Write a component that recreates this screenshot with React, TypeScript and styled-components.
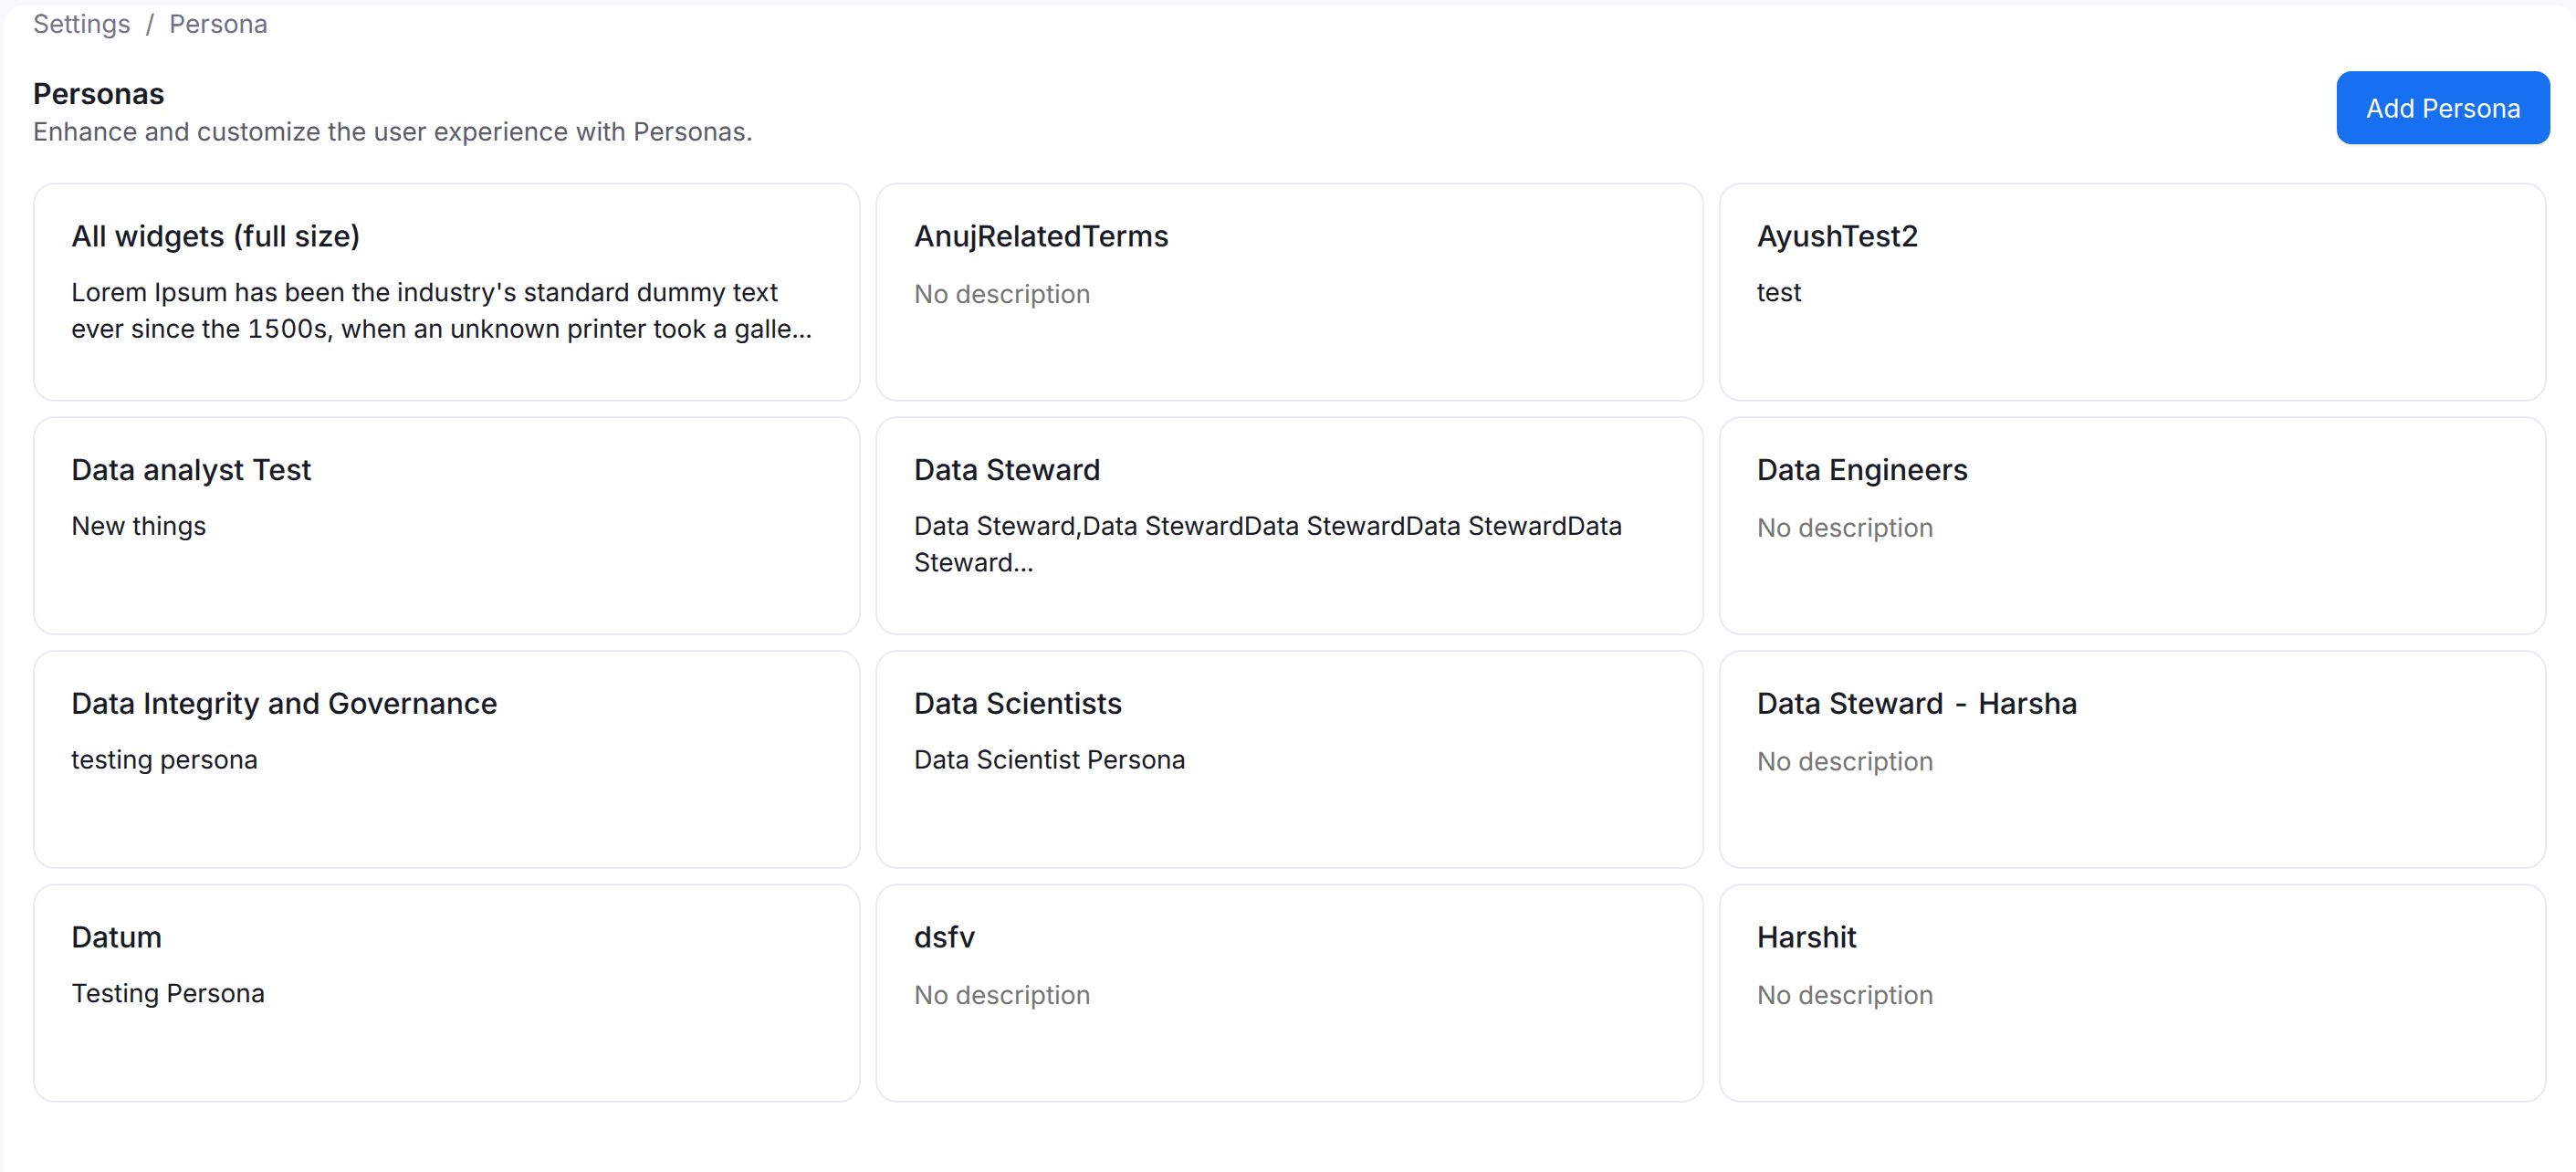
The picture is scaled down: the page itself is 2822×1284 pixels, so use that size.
import React from "react";
import styled, { createGlobalStyle } from "styled-components";

const Global = createGlobalStyle`
  html, body { margin: 0; padding: 0; background: #f8f9fd; }
  body {
    font-family: Inter, "Noto Sans", sans-serif;
    text-rendering: geometricPrecision;
    -webkit-font-smoothing: antialiased;
  }
`;

const Page = styled.div`
  box-sizing: border-box;
  width: 2822px;
  height: 1284px;
  padding: 6px 0 0 4px;
  overflow: hidden;
`;

const Panel = styled.main`
  box-sizing: border-box;
  height: 100%;
  background: #fff;
  border-radius: 24px 24px 0 0;
  padding: 2px 32px 0;
`;

const Breadcrumb = styled.nav`
  display: flex;
  gap: 16px;
  font-size: 28px;
  line-height: 36px;
`;

const Crumb = styled.span<{ $current?: boolean }>`
  color: ${(p) => (p.$current ? "#6f6f85" : "#757585")};
`;

const Header = styled.header`
  display: flex;
  align-items: flex-start;
  justify-content: space-between;
  margin-top: 34px;
`;

const TitleBlock = styled.div`
  display: flex;
  flex-direction: column;
  gap: 1px;
  margin-top: 5px;
`;

const Title = styled.h1`
  margin: 0;
  font-size: 32px;
  line-height: 40px;
  font-weight: 600;
  color: #181a25;
`;

const Subtitle = styled.p`
  margin: 0;
  font-size: 28px;
  line-height: 40px;
  color: #5a5c69;
`;

const AddButton = styled.button`
  box-sizing: border-box;
  width: 234px;
  height: 80px;
  margin-right: -4px;
  padding: 2px 0 0;
  border: 0;
  border-radius: 16px;
  background: #1770ef;
  color: #fff;
  font-family: inherit;
  font-size: 28px;
  font-weight: 400;
  box-shadow: 0 2px 4px rgba(16, 24, 40, 0.08);
`;

const Grid = styled.section`
  display: grid;
  grid-template-columns: repeat(3, 1fr);
  grid-auto-rows: 240px;
  gap: 16px;
  margin-top: 36px;
`;

const Card = styled.article`
  box-sizing: border-box;
  border: 2px solid #e9eaf5;
  border-radius: 24px;
  padding: 37px 40px;
`;

const CardTitle = styled.h2`
  margin: 0;
  font-size: 32px;
  line-height: 40px;
  font-weight: 500;
  color: #181a25;
`;

const TitleDash = styled.span`
  margin: 0 3px;
`;

const CardText = styled.p<{ $muted?: boolean }>`
  margin: ${(p) => (p.$muted ? "23px" : "21px")} 0 0;
  font-size: 28px;
  line-height: 40px;
  font-weight: 400;
  font-variant-numeric: tabular-nums;
  color: ${(p) => (p.$muted ? "#757575" : "#181a25")};
  display: -webkit-box;
  -webkit-box-orient: vertical;
  -webkit-line-clamp: 2;
  overflow: hidden;
`;

const personas: { name: string; text?: string }[] = [
  { name: "All widgets (full size)", text: "Lorem Ipsum has been the industry's standard dummy text ever since the 1500s, when an unknown printer took a galle..." },
  { name: "AnujRelatedTerms" },
  { name: "AyushTest2", text: "test" },
  { name: "Data analyst Test", text: "New things" },
  { name: "Data Steward", text: "Data Steward,Data StewardData StewardData StewardData Steward..." },
  { name: "Data Engineers" },
  { name: "Data Integrity and Governance", text: "testing persona" },
  { name: "Data Scientists", text: "Data Scientist Persona" },
  { name: "Data Steward - Harsha" },
  { name: "Datum", text: "Testing Persona" },
  { name: "dsfv" },
  { name: "Harshit" },
];

function PersonaName({ name }: { name: string }) {
  const parts = name.split(" - ");
  if (parts.length < 2) return <CardTitle>{name}</CardTitle>;
  return (
    <CardTitle>
      {parts[0]} <TitleDash>-</TitleDash> {parts[1]}
    </CardTitle>
  );
}

export default function App() {
  return (
    <Page>
      <Global />
      <Panel>
        <Breadcrumb>
          <Crumb>Settings</Crumb>
          <Crumb>/</Crumb>
          <Crumb $current>Persona</Crumb>
        </Breadcrumb>
        <Header>
          <TitleBlock>
            <Title>Personas</Title>
            <Subtitle>Enhance and customize the user experience with Personas.</Subtitle>
          </TitleBlock>
          <AddButton>Add Persona</AddButton>
        </Header>
        <Grid>
          {personas.map((p) => (
            <Card key={p.name}>
              <PersonaName name={p.name} />
              <CardText $muted={!p.text}>{p.text ?? "No description"}</CardText>
            </Card>
          ))}
        </Grid>
      </Panel>
    </Page>
  );
}
